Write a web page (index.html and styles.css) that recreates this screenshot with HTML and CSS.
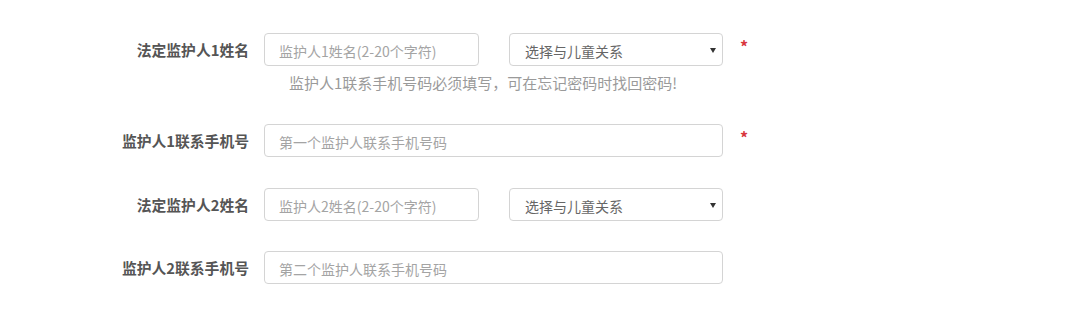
FILE: index.html
```html
<!DOCTYPE html>
<html lang="zh-CN">
<head>
    <meta charset="UTF-8">
    <meta name="viewport" content="width=device-width, initial-scale=1.0">
    <title>监护人信息</title>
    <link rel="stylesheet" href="styles.css">
</head>
<body>
    <form class="guardian-form">
        <div class="form-row has-tip">
            <label class="form-label" for="g1Name">法定监护人1姓名</label>
            <div class="form-controls">
                <input type="text" id="g1Name" class="input input-short" placeholder="监护人1姓名(2-20个字符)">
                <div class="select-wrap">
                    <select class="select" id="g1Relation">
                        <option>选择与儿童关系</option>
                        <option>父亲</option>
                        <option>母亲</option>
                    </select>
                </div>
                <span class="required">*</span>
            </div>
        </div>
        <p class="form-tip">监护人1联系手机号码必须填写，可在忘记密码时找回密码!</p>

        <div class="form-row">
            <label class="form-label" for="g1Phone">监护人1联系手机号</label>
            <div class="form-controls">
                <input type="text" id="g1Phone" class="input input-long" placeholder="第一个监护人联系手机号码">
                <span class="required">*</span>
            </div>
        </div>

        <div class="form-row">
            <label class="form-label" for="g2Name">法定监护人2姓名</label>
            <div class="form-controls">
                <input type="text" id="g2Name" class="input input-short" placeholder="监护人2姓名(2-20个字符)">
                <div class="select-wrap">
                    <select class="select" id="g2Relation">
                        <option>选择与儿童关系</option>
                        <option>父亲</option>
                        <option>母亲</option>
                    </select>
                </div>
            </div>
        </div>

        <div class="form-row last">
            <label class="form-label" for="g2Phone">监护人2联系手机号</label>
            <div class="form-controls">
                <input type="text" id="g2Phone" class="input input-long" placeholder="第二个监护人联系手机号码">
            </div>
        </div>
    </form>
</body>
</html>
```

FILE: styles.css
```css
body {
    margin: 0;
    padding: 0;
    background-color: #fff;
    font-family: "Noto Sans CJK SC", "Liberation Sans", sans-serif;
    color: #555;
}
.guardian-form {
    padding-top: 33px;
}
.form-row {
    display: flex;
    align-items: center;
    margin-bottom: 31px;
}
.form-row.has-tip {
    margin-bottom: 0;
}
.form-row.last {
    margin-top: -1px;
}
.form-label {
    width: 249px;
    text-align: right;
    font-size: 14.8px;
    font-weight: bold;
    line-height: 20px;
    color: #555;
}
.form-controls {
    display: flex;
    align-items: center;
    margin-left: 15px;
}
.input,
.select {
    box-sizing: border-box;
    height: 33px;
    border: 1px solid #d4d4d4;
    border-radius: 4px;
    background: #fff;
    font-family: inherit;
    font-size: 14px;
    color: #666;
    outline: none;
}
.input {
    padding: 2px 14px 0;
}
.input::placeholder {
    color: #a4a4a4;
}
.input-short {
    width: 215px;
}
.input-long {
    width: 459px;
}
.select-wrap {
    position: relative;
    margin-left: 30px;
}
.select {
    width: 214px;
    padding: 2px 15px 0;
    -webkit-appearance: none;
    appearance: none;
}
.select-wrap::after {
    content: "";
    position: absolute;
    right: 7px;
    top: 15px;
    border-left: 3px solid transparent;
    border-right: 3px solid transparent;
    border-top: 5px solid #333;
    pointer-events: none;
}
.required {
    margin-left: 17px;
    margin-top: -7px;
    color: #d9363e;
    font-size: 16px;
    font-weight: bold;
    line-height: 20px;
}
.form-tip {
    margin: 7px 0 31px 289px;
    font-size: 15px;
    line-height: 20px;
    color: #9a9a9a;
}
```
